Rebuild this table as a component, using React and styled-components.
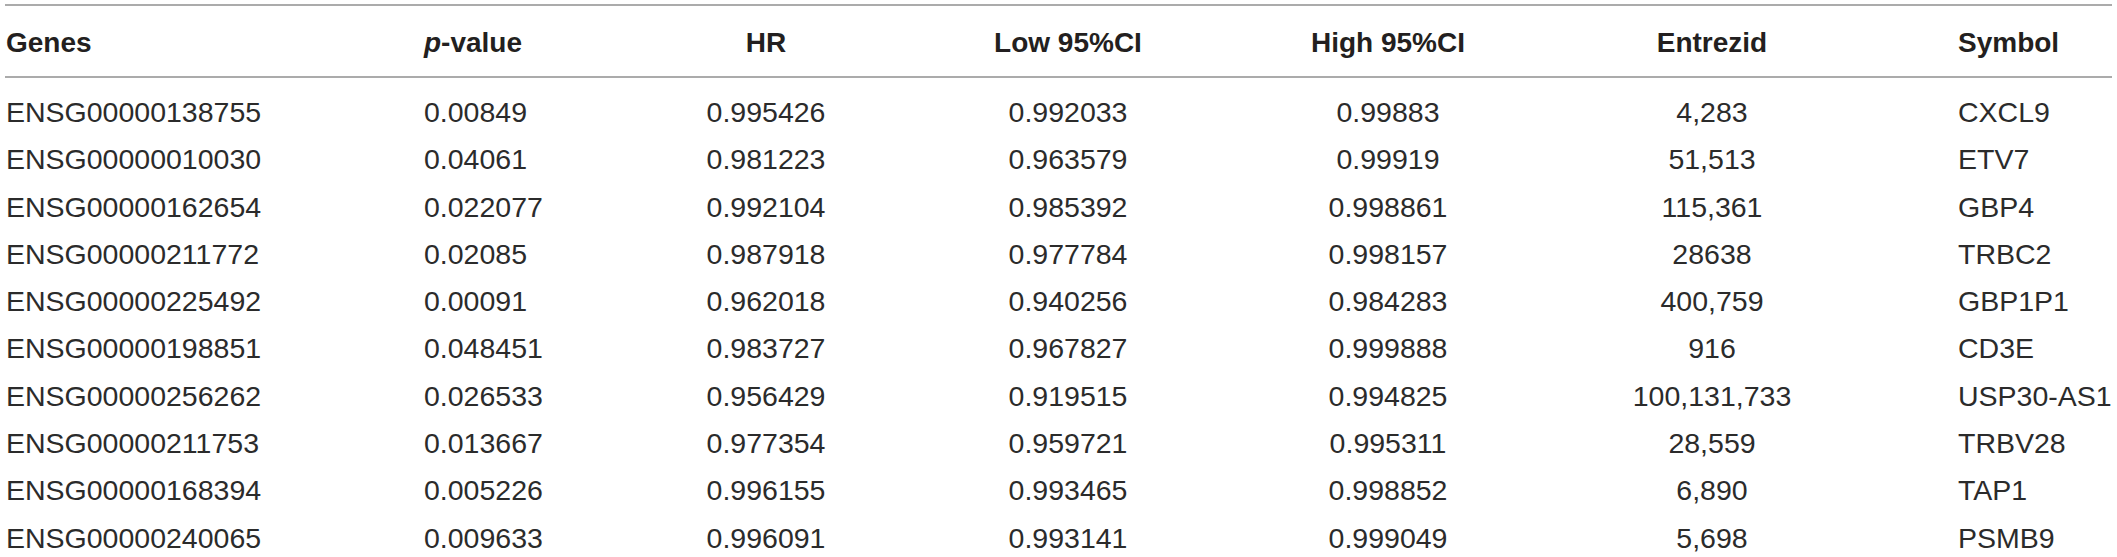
import React from 'react'
import styled, { createGlobalStyle } from 'styled-components';

const GlobalStyle = createGlobalStyle`
    body{
        margin:0;
        background:#ffffff;
    }
`;

const columns = [
    { key: 'gene', label: 'Genes', align: 'left', pad: 1 },
    { key: 'p', label: 'p-value', align: 'left', pad: 0 },
    { key: 'hr', label: 'HR', align: 'center', pad: 0 },
    { key: 'low', label: 'Low 95%CI', align: 'center', pad: 0 },
    { key: 'high', label: 'High 95%CI', align: 'center', pad: 0 },
    { key: 'entrez', label: 'Entrezid', align: 'center', pad: 0 },
    { key: 'symbol', label: 'Symbol', align: 'left', pad: 66 },
];

const rows = [
    ['ENSG00000138755', '0.00849', '0.995426', '0.992033', '0.99883', '4,283', 'CXCL9'],
    ['ENSG00000010030', '0.04061', '0.981223', '0.963579', '0.99919', '51,513', 'ETV7'],
    ['ENSG00000162654', '0.022077', '0.992104', '0.985392', '0.998861', '115,361', 'GBP4'],
    ['ENSG00000211772', '0.02085', '0.987918', '0.977784', '0.998157', '28638', 'TRBC2'],
    ['ENSG00000225492', '0.00091', '0.962018', '0.940256', '0.984283', '400,759', 'GBP1P1'],
    ['ENSG00000198851', '0.048451', '0.983727', '0.967827', '0.999888', '916', 'CD3E'],
    ['ENSG00000256262', '0.026533', '0.956429', '0.919515', '0.994825', '100,131,733', 'USP30-AS1'],
    ['ENSG00000211753', '0.013667', '0.977354', '0.959721', '0.995311', '28,559', 'TRBV28'],
    ['ENSG00000168394', '0.005226', '0.996155', '0.993465', '0.998852', '6,890', 'TAP1'],
    ['ENSG00000240065', '0.009633', '0.996091', '0.993141', '0.999049', '5,698', 'PSMB9'],
];

const App = () => {
  return (
    <>
        <GlobalStyle />
        <Table>
            <HeadRow>
                {columns.map((col) => (
                    <HeadCell key={col.key} $align={col.align} $pad={col.pad}>
                        {col.key === 'p' ? (<><em>p</em>-value</>) : col.label}
                    </HeadCell>
                ))}
            </HeadRow>
            <Body>
                {rows.map((row, index) => (
                    <Row key={index}>
                        {row.map((value, i) => (
                            <Cell key={i} $align={columns[i].align} $pad={columns[i].pad}>
                                {value}
                            </Cell>
                        ))}
                    </Row>
                ))}
            </Body>
        </Table>
    </>
  )
}

const Table = styled.div`
    margin:4px 5px 0 5px;
    border-top:2px solid #ababab;
    font-family:"Liberation Sans", Arial, Helvetica, sans-serif;
    font-size:28px;
    color:#231f20;
`;

const grid = `
    display:grid;
    grid-template-columns: 419px 216px 252px 352px 288px 360px 1fr;
`;

const HeadRow = styled.div`
    ${grid}
    padding-top:3px;
    border-bottom:2px solid #ababab;
`;

const HeadCell = styled.div`
    line-height:67px;
    font-weight:bold;
    white-space:nowrap;
    text-align:${(p) => p.$align};
    padding-left:${(p) => p.$pad}px;
    em{
        font-style:italic;
    }
`;

const Body = styled.div`
    padding-top:11px;
`;

const Row = styled.div`
    ${grid}
    height:47.3px;
`;

const Cell = styled.div`
    line-height:47.3px;
    font-size:28.5px;
    color:#2b2b2b;
    white-space:nowrap;
    text-align:${(p) => p.$align};
    padding-left:${(p) => p.$pad}px;
`;

export default App
